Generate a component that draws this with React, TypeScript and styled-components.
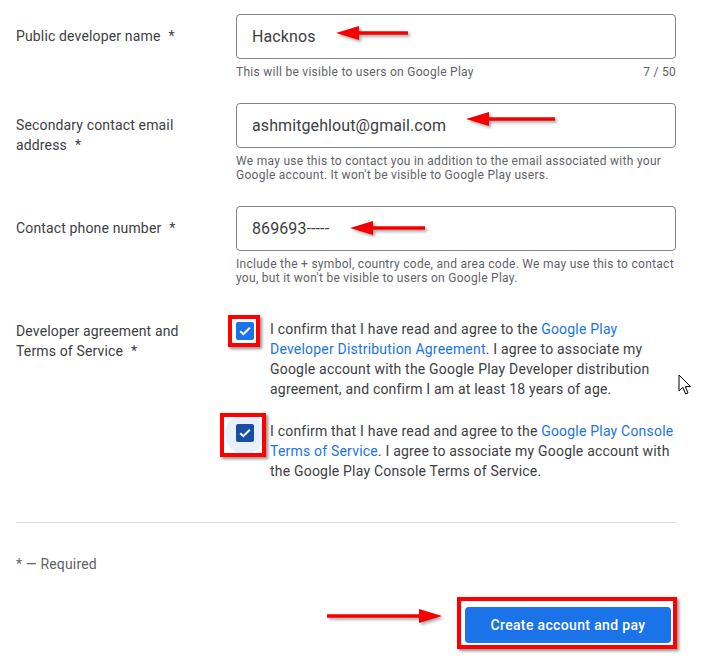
import React from 'react';
import styled, { createGlobalStyle } from 'styled-components';

const Global = createGlobalStyle`
  html, body { margin: 0; padding: 0; background: #fff; }
  body {
    font-family: Roboto, "Noto Sans", Arial, sans-serif;
    color: #3c4043;
    -webkit-font-smoothing: antialiased;
  }
  * { box-sizing: border-box; }
`;

const Page = styled.div`
  position: relative;
  width: 716px;
  height: 663px;
  padding: 14px 40px 0 16px;
  overflow: hidden;
`;

const Row = styled.div`
  display: grid;
  grid-template-columns: 220px 440px;
  margin-bottom: 24px;
`;

const Label = styled.div`
  padding-top: 12px;
  padding-right: 38px;
  font-size: 14px;
  line-height: 20px;
  letter-spacing: 0.15px;
  color: #3c4043;
`;

const Req = styled.span`
  margin-left: 8px;
`;

const Field = styled.div`
  display: flex;
  flex-direction: column;
`;

const InputBox = styled.div`
  height: 45px;
  border: 1px solid #80868b;
  border-radius: 4px;
  padding: 0 15px;
  display: flex;
  align-items: center;
  font-size: 16px;
  letter-spacing: 0.1px;
  color: #3c4043;
`;

const Helper = styled.div`
  display: flex;
  justify-content: space-between;
  gap: 12px;
  margin-top: 6px;
  font-size: 12px;
  line-height: 14px;
  letter-spacing: 0.28px;
  color: #5f6368;
`;

const Checks = styled.div`
  padding-top: 10px;
  display: flex;
  flex-direction: column;
  gap: 22px;
`;

const CheckItem = styled.div`
  display: flex;
  align-items: flex-start;
  gap: 16px;
  font-size: 14px;
  line-height: 20px;
  letter-spacing: 0.2px;
  color: #3c4043;
`;

const CheckWrap = styled.span<{ $halo?: boolean }>`
  position: relative;
  flex: 0 0 18px;
  width: 18px;
  height: 18px;
  margin-top: 3px;
  &::before {
    content: '';
    display: ${p => (p.$halo ? 'block' : 'none')};
    position: absolute;
    left: -11px;
    top: -10px;
    width: 40px;
    height: 40px;
    border-radius: 50%;
    background: #e8f0fe;
  }
`;

const Box = styled.span<{ $dark?: boolean }>`
  position: relative;
  display: flex;
  align-items: center;
  justify-content: center;
  width: 18px;
  height: 18px;
  border-radius: 2px;
  background: ${p => (p.$dark ? '#174ea6' : '#1a73e8')};
`;

const Link = styled.a`
  color: #1a73e8;
  text-decoration: none;
`;

const Highlight = styled.span<{ $t: number; $r: number; $b: number; $l: number }>`
  position: absolute;
  top: ${p => -p.$t}px;
  right: ${p => -p.$r}px;
  bottom: ${p => -p.$b}px;
  left: ${p => -p.$l}px;
  border: 4px solid #f00;
  box-shadow: 2px 2px 3px rgba(0, 0, 0, 0.45);
  pointer-events: none;
`;

const Divider = styled.hr`
  margin: 41px 0 0;
  border: none;
  border-top: 1px solid #dadce0;
  width: 660px;
`;

const Required = styled.div`
  margin-top: 31px;
  font-size: 14px;
  line-height: 20px;
  letter-spacing: 0.15px;
  color: #5f6368;
`;

const Actions = styled.div`
  display: flex;
  justify-content: flex-end;
  padding-right: 5px;
  margin-top: 33px;
`;

const Primary = styled.button`
  position: relative;
  height: 36px;
  width: 206px;
  background: #1a73e8;
  color: #fff;
  border: none;
  border-radius: 4px;
  font-family: Roboto, Arial, sans-serif;
  font-weight: 500;
  font-size: 14px;
  letter-spacing: 0.35px;
  cursor: pointer;
`;

const ArrowSvg = styled.svg<{ $x: number; $y: number }>`
  position: absolute;
  left: ${p => p.$x}px;
  top: ${p => p.$y - 9}px;
  overflow: visible;
  filter: drop-shadow(2px 2px 1.5px rgba(0, 0, 0, 0.35));
`;

const CursorSvg = styled.svg`
  position: absolute;
  left: 678px;
  top: 374px;
`;

function Arrow({ x, y, len, dir }: { x: number; y: number; len: number; dir: 'left' | 'right' }) {
  const pts =
    dir === 'left'
      ? `0,9 23,2 23,7.3 ${len},7.3 ${len},10.7 23,10.7 23,16`
      : `${len},9 ${len - 23},2 ${len - 23},7.3 0,7.3 0,10.7 ${len - 23},10.7 ${len - 23},16`;
  return (
    <ArrowSvg $x={x} $y={y} width={len} height={18} viewBox={`0 0 ${len} 18`}>
      <polygon points={pts} fill="#f40000" />
    </ArrowSvg>
  );
}

const Check = () => (
  <svg width="14" height="14" viewBox="0 0 14 14">
    <path d="M2.2 7.2 L5.4 10.2 L11.8 3.8" fill="none" stroke="#fff" strokeWidth="2" />
  </svg>
);

export default function App() {
  return (
    <Page>
      <Global />
      <Row>
        <Label>
          Public developer name<Req>*</Req>
        </Label>
        <Field>
          <InputBox>Hacknos</InputBox>
          <Helper>
            <span>This will be visible to users on Google Play</span>
            <span>7 / 50</span>
          </Helper>
        </Field>
      </Row>
      <Row>
        <Label>
          Secondary contact email address<Req>*</Req>
        </Label>
        <Field>
          <InputBox>ashmitgehlout@gmail.com</InputBox>
          <Helper>
            <span>
              We may use this to contact you in addition to the email associated with your Google
              account. It won't be visible to Google Play users.
            </span>
          </Helper>
        </Field>
      </Row>
      <Row>
        <Label>
          Contact phone number<Req>*</Req>
        </Label>
        <Field>
          <InputBox>869693-----</InputBox>
          <Helper>
            <span>
              Include the + symbol, country code, and area code. We may use this to contact you,
              but it won't be visible to users on Google Play.
            </span>
          </Helper>
        </Field>
      </Row>
      <Row>
        <Label>
          Developer agreement and Terms of Service<Req>*</Req>
        </Label>
        <Checks>
          <CheckItem>
            <CheckWrap>
              <Box>
                <Check />
              </Box>
              <Highlight $t={7} $r={6} $b={7} $l={8} />
            </CheckWrap>
            <span>
              I confirm that I have read and agree to the{' '}
              <Link>Google Play Developer Distribution Agreement</Link>. I agree to associate my
              Google account with the Google Play Developer distribution agreement, and confirm I
              am at least 18 years of age.
            </span>
          </CheckItem>
          <CheckItem>
            <CheckWrap $halo>
              <Box $dark>
                <Check />
              </Box>
              <Highlight $t={11} $r={12} $b={15} $l={16} />
            </CheckWrap>
            <span>
              I confirm that I have read and agree to the{' '}
              <Link>Google Play Console Terms of Service</Link>. I agree to associate my Google
              account with the Google Play Console Terms of Service.
            </span>
          </CheckItem>
        </Checks>
      </Row>
      <Divider />
      <Required>* — Required</Required>
      <Actions>
        <Primary>
          Create account and pay
          <Highlight $t={10} $r={6} $b={6} $l={8} />
        </Primary>
      </Actions>

      <Arrow x={336} y={33} len={72} dir="left" />
      <Arrow x={466} y={119} len={89} dir="left" />
      <Arrow x={350} y={228} len={75} dir="left" />
      <Arrow x={327} y={616} len={115} dir="right" />

      <CursorSvg width="14" height="22" viewBox="0 0 14 22">
        <path
          d="M1 1 L1 17 L4.8 13.4 L7.6 20 L10 19 L7.3 12.6 L12.5 12.6 Z"
          fill="#fff"
          stroke="#000"
          strokeWidth="1"
          strokeLinejoin="round"
        />
      </CursorSvg>
    </Page>
  );
}
